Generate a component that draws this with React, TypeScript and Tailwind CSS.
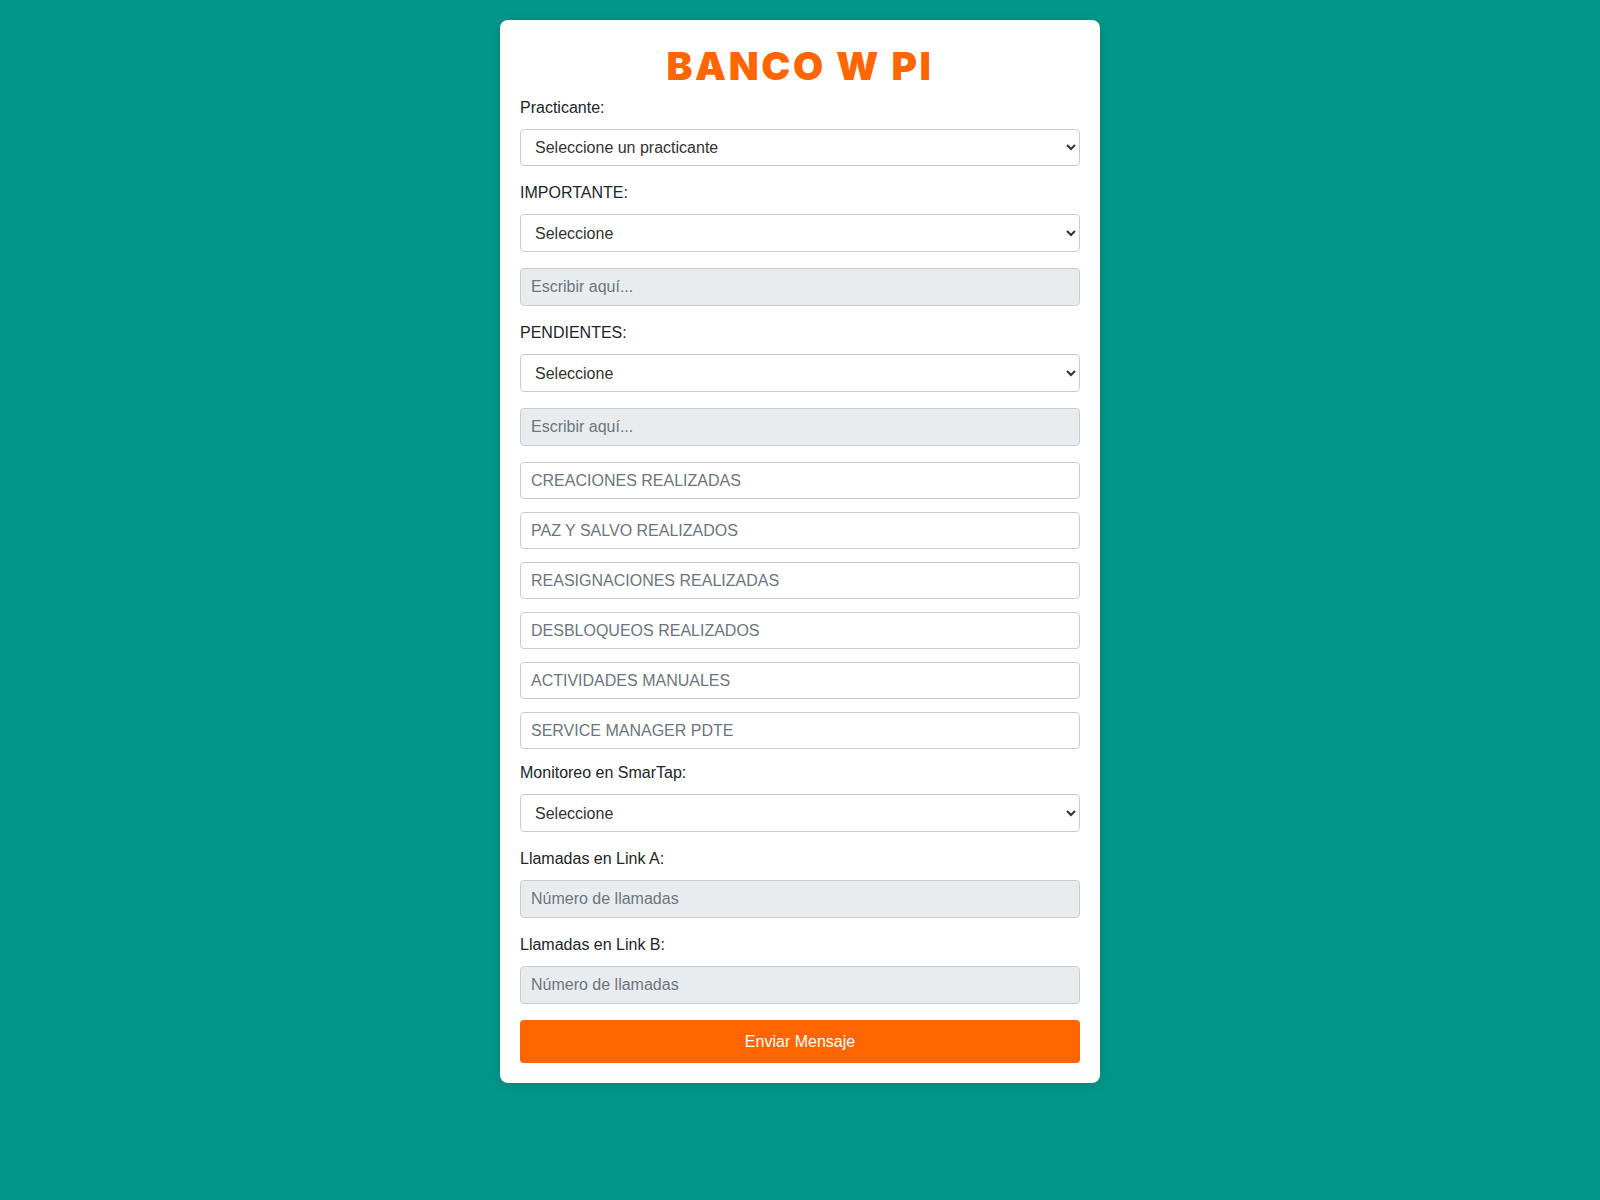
import React from "react";

const labelCls = "block pt-[2px] mb-[12px] leading-[18px] text-[16px] text-[#212529]";
const selectCls =
  "block w-full h-[37.4px] mb-[16.6px] px-[10px] text-[16px] text-[#333] bg-white border border-[#ccc] rounded-[4px]";
const grayCls =
  "block w-full h-[37.4px] mb-[16.6px] px-[10px] text-[16px] text-[#333] bg-[#e9ecef] border border-[#ccc] rounded-[4px] placeholder:text-[#6c757d] outline-none";
const whiteCls =
  "block w-full h-[37px] mb-[13px] px-[10px] text-[16px] text-[#333] bg-white border border-[#ccc] rounded-[4px] placeholder:text-[#6c757d] outline-none";

const activities = [
  "CREACIONES REALIZADAS",
  "PAZ Y SALVO REALIZADOS",
  "REASIGNACIONES REALIZADAS",
  "DESBLOQUEOS REALIZADOS",
  "ACTIVIDADES MANUALES",
  "SERVICE MANAGER PDTE",
];

export default function App() {
  return (
    <div
      className="min-h-[1200px] w-full bg-[#009688] pt-[20px] pb-[40px]"
      style={{ fontFamily: '"Liberation Sans", Arial, sans-serif' }}
    >
      <form
        className="mx-auto w-[600px] bg-white rounded-[8px] p-[20px] shadow-[0_2px_10px_rgba(0,0,0,0.12)]"
        onSubmit={(e) => e.preventDefault()}
      >
        {/* Title */}
        <h1
          className="text-center text-[#ff6600] text-[39px] font-black leading-[46px] mb-[7.5px] pt-[3px] tracking-[2.6px]"
          style={{ fontFamily: 'Inter, "DejaVu Sans", sans-serif' }}
        >
          BANCO W PI
        </h1>

        <label className={labelCls}>Practicante:</label>
        <select className={selectCls} defaultValue="">
          <option value="">Seleccione un practicante</option>
        </select>

        <label className={labelCls}>IMPORTANTE:</label>
        <select className={selectCls} defaultValue="">
          <option value="">Seleccione</option>
          <option value="si">Sí</option>
          <option value="no">No</option>
        </select>
        <input className={grayCls} placeholder="Escribir aquí..." />

        <label className={labelCls}>PENDIENTES:</label>
        <select className={selectCls} defaultValue="">
          <option value="">Seleccione</option>
          <option value="si">Sí</option>
          <option value="no">No</option>
        </select>
        <input className={grayCls} placeholder="Escribir aquí..." />

        {activities.map((a) => (
          <input key={a} className={whiteCls} placeholder={a} />
        ))}

        <label className={labelCls}>Monitoreo en SmarTap:</label>
        <select className={selectCls} defaultValue="">
          <option value="">Seleccione</option>
          <option value="si">Sí</option>
          <option value="no">No</option>
        </select>

        <label className={labelCls}>Llamadas en Link A:</label>
        <input className={grayCls} type="number" placeholder="Número de llamadas" />

        <label className={labelCls}>Llamadas en Link B:</label>
        <input className={grayCls} type="number" placeholder="Número de llamadas" />

        <button
          type="submit"
          className="block w-full h-[43px] bg-[#ff6600] text-white text-[16px] rounded-[4px]"
        >
          Enviar Mensaje
        </button>
      </form>
    </div>
  );
}
